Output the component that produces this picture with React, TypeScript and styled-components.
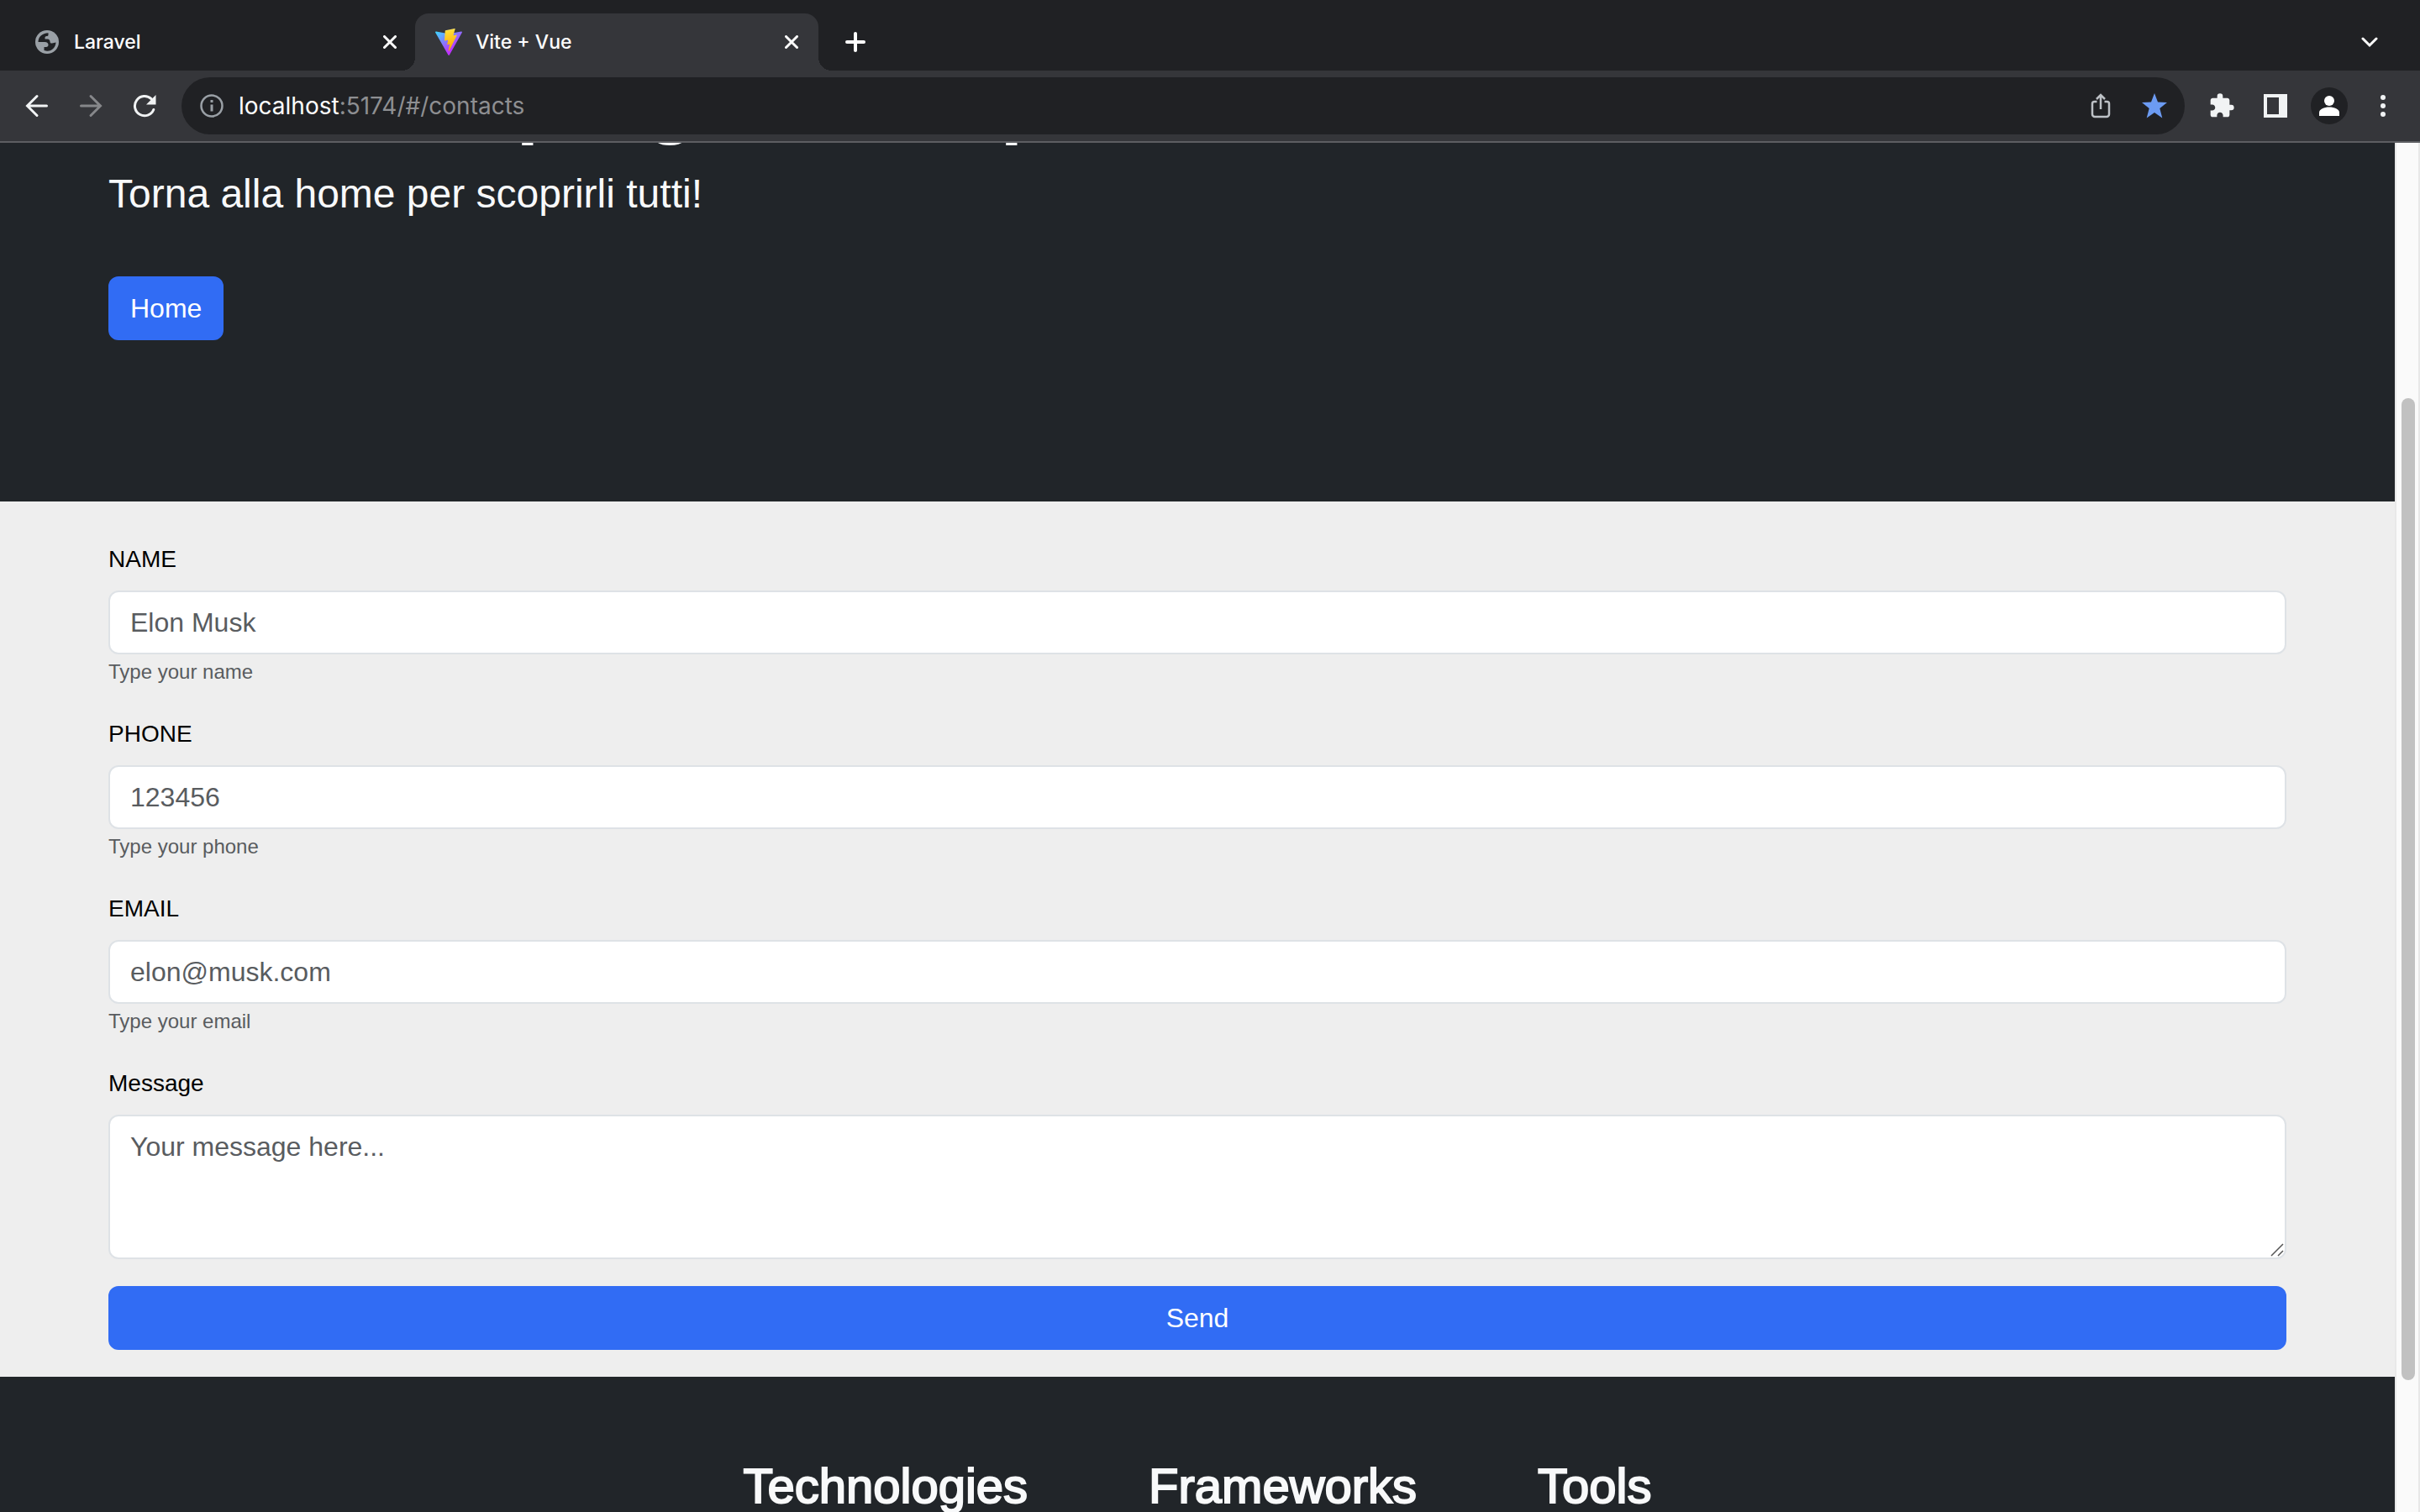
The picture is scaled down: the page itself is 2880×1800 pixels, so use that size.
import React from 'react';
import styled, { createGlobalStyle } from 'styled-components';

const GlobalStyle = createGlobalStyle`
  *, *::before, *::after { box-sizing: border-box; }
  body {
    margin: 0;
    overflow: hidden;
    background: #212529;
    font-family: "Liberation Sans", Arial, sans-serif;
  }
  h1, h2, p { margin: 0; }
`;

const Window = styled.div`
  display: flex;
  flex-direction: column;
  height: 100vh;
`;

const Chrome = styled.header`
  flex: none;
  color: #fff;
  font-family: Inter, Roboto, sans-serif;
  border-bottom: 2px solid #5d5e62;
`;

const TabStrip = styled.nav`
  display: flex;
  align-items: center;
  height: 84px;
  padding: 16px 40px 0 16px;
  background: #202124;
`;

const Tab = styled.div<{ $active?: boolean }>`
  position: relative;
  display: flex;
  align-items: center;
  gap: 16px;
  width: 480px;
  height: 68px;
  padding: 0 22px 0 24px;
  border-radius: 16px 16px 0 0;
  background: ${(p) => (p.$active ? '#35363a' : 'transparent')};

  & + & {
    margin-left: -2px;
  }

  ${(p) =>
    p.$active &&
    `
    &::before, &::after {
      content: '';
      position: absolute;
      bottom: 0;
      width: 16px;
      height: 16px;
    }
    &::before { left: -16px; background: radial-gradient(circle at 0 0, transparent 16px, #35363a 16px); }
    &::after { right: -16px; background: radial-gradient(circle at 100% 0, transparent 16px, #35363a 16px); }
  `}
`;

const TabTitle = styled.span`
  flex: 1;
  font-size: 23px;
  font-weight: 500;
  line-height: 32px;
`;

const IconButton = styled.button<{ $size?: number; $dim?: boolean; $round?: boolean }>`
  display: flex;
  flex: none;
  align-items: center;
  justify-content: center;
  width: ${(p) => p.$size ?? 44}px;
  height: ${(p) => p.$size ?? 44}px;
  padding: 0;
  border: 0;
  border-radius: 50%;
  background: ${(p) => (p.$round ? '#202124' : 'transparent')};
  color: ${(p) => (p.$dim ? '#86878a' : '#f1f3f4')};
`;

const NewTab = styled.div`
  display: flex;
  flex: 1;
  align-items: center;
  justify-content: space-between;
  padding-left: 22px;
`;

const Toolbar = styled.div`
  display: flex;
  align-items: center;
  gap: 20px;
  height: 84px;
  padding: 0 22px;
  background: #35363a;
`;

const AddressBar = styled.div`
  display: flex;
  flex: 1;
  align-items: center;
  gap: 20px;
  height: 68px;
  margin: 0 2px;
  padding: 0 14px 0 22px;
  border-radius: 34px;
  background: #202124;
`;

const Address = styled.span`
  display: flex;
  flex: 1;
  align-items: center;
  gap: 18px;
  color: #8e8f92;
  font-size: 28px;
  line-height: 36px;
`;

const Host = styled.span`
  color: #fff;
`;

const Viewport = styled.div`
  display: flex;
  flex: 1;
  min-height: 0;
`;

const Page = styled.main`
  flex: 1;
  height: 100%;
  overflow: hidden;
`;

const Container = styled.div`
  max-width: 2640px;
  margin: 0 auto;
  padding: 0 24px;
`;

const Hero = styled.section`
  margin-top: -108px;
  padding-bottom: 192px;
  background: #212529;
  color: #f8f9fa;
`;

const HeroTitle = styled.h1`
  margin-bottom: 16px;
  font-size: 96px;
  font-weight: 700;
  line-height: 115px;
`;

const HeroText = styled.p`
  margin-bottom: 60px;
  font-size: 48px;
  line-height: 76px;
`;

const buttonLook = `
  padding: 12px 24px;
  border: 2px solid #316cf4;
  border-radius: 12px;
  background: #316cf4;
  color: #fff;
  font-family: inherit;
  font-size: 32px;
  line-height: 48px;
  text-align: center;
  text-decoration: none;
`;

const HomeLink = styled.a`
  display: inline-block;
  vertical-align: top;
  ${buttonLook}
`;

const SendButton = styled.button`
  display: block;
  width: 100%;
  ${buttonLook}
`;

const ContactSection = styled.section`
  padding: 48px 0 32px;
  background: #eee;
  color: #000;
`;

const Field = styled.div`
  margin-bottom: 32px;
  font-size: 28px;
  line-height: 42px;
`;

const Label = styled.label`
  display: block;
  margin-bottom: 16px;
`;

const controlLook = `
  display: block;
  width: 100%;
  padding: 12px 24px;
  border: 2px solid #dee2e6;
  border-radius: 12px;
  background: #fff;
  color: #212529;
  font-family: inherit;
  font-size: 32px;
  line-height: 48px;
  &::placeholder { color: #595c5f; opacity: 1; }
`;

const Input = styled.input`
  height: 76px;
  ${controlLook}
`;

const MessageBox = styled.div`
  position: relative;
`;

const TextArea = styled.textarea`
  ${controlLook}
  resize: none;
`;

const Grip = styled.svg`
  position: absolute;
  right: 3px;
  bottom: 3px;
`;

const Help = styled.small`
  display: block;
  color: #595c5f;
  font-size: 24px;
`;

const Footer = styled.footer`
  display: flex;
  justify-content: center;
  gap: 144px;
  padding-top: 96px;
  background: #212529;
  color: #f8f9fa;
`;

const FooterTitle = styled.h2`
  font-size: 58px;
  font-weight: 400;
  line-height: 68px;
  -webkit-text-stroke: 2px currentColor;
`;

const ScrollTrack = styled.div`
  display: grid;
  flex: none;
  grid-template-rows: 304fr 1169fr 157fr;
  width: 30px;
  padding: 0 4px 0 6px;
  border: solid #e8e8e8;
  border-width: 0 2px;
  background: #fafafa;
`;

const ScrollThumb = styled.div`
  grid-row: 2;
  border-radius: 8px;
  background: #c1c1c1;
`;

const Globe = () => (
  <svg width="32" height="28" viewBox="-2 0 32 28" aria-hidden="true">
    <circle cx="14" cy="14" r="14" fill="#9aa0a6" />
    <path
      d="M3.500 14C3.500 8 8 3.500 15.500 3.200V5.500C15.500 6.500 14.500 7 13.500 7C12 7 11.500 8 11.500 9V10.500H14.500C16.500 10.500 17.500 12 17.500 13.500C17.500 15 18.500 15.800 20 15.500L24.500 14.500C24.300 20.500 19.500 25 14 24.700L10.500 24V20H13C14.500 20 15.500 19 15.500 17.500C15.500 15.500 14 14 11.500 14Z"
      fill="#202124"
    />
  </svg>
);

const ViteLogo = () => (
  <svg width="32" height="32" viewBox="0 0 256 257" aria-hidden="true">
    <defs>
      <linearGradient id="viteBody" x1="-.828%" x2="57.636%" y1="7.652%" y2="78.411%">
        <stop offset="0%" stopColor="#41D1FF" />
        <stop offset="100%" stopColor="#BD34FE" />
      </linearGradient>
      <linearGradient id="viteBolt" x1="43.376%" x2="50.316%" y1="2.242%" y2="89.030%">
        <stop offset="0%" stopColor="#FFEA83" />
        <stop offset="8.333%" stopColor="#FFDD35" />
        <stop offset="100%" stopColor="#FFA800" />
      </linearGradient>
    </defs>
    <path
      fill="url(#viteBody)"
      d="M255.153 37.938L134.897 252.976c-2.483 4.440-8.862 4.466-11.382.048L.875 37.958c-2.746-4.814 1.371-10.646 6.827-9.670l120.385 21.517a6.537 6.537 0 0 0 2.322-.004l117.867-21.483c5.438-.991 9.574 4.796 6.877 9.620Z"
    />
    <path
      fill="url(#viteBolt)"
      d="M185.432.063L96.440 17.501a3.268 3.268 0 0 0-2.634 3.014l-5.474 92.456a3.268 3.268 0 0 0 3.997 3.378l24.777-5.718c2.318-.535 4.413 1.507 3.936 3.838l-7.361 36.047c-.495 2.426 1.782 4.500 4.151 3.780l15.304-4.649c2.372-.720 4.652 1.360 4.150 3.788l-11.698 56.621c-.732 3.542 3.979 5.473 5.943 2.437l1.313-2.028l72.516-144.720c1.215-2.423-.880-5.186-3.540-4.672l-25.505 4.922c-2.396.462-4.435-1.770-3.759-4.114l16.646-57.705c.677-2.350-1.370-4.583-3.769-4.113Z"
    />
  </svg>
);

const Cross = () => (
  <svg width="16" height="16" viewBox="0 0 16 16" stroke="#fff" strokeWidth="3" aria-hidden="true">
    <path d="M1.500 1.500l13 13M14.500 1.500l-13 13" strokeLinecap="round" />
  </svg>
);

const fields = [
  { id: 'name', label: 'NAME', type: 'text', placeholder: 'Elon Musk', help: 'Type your name' },
  { id: 'phone', label: 'PHONE', type: 'tel', placeholder: '123456', help: 'Type your phone' },
  { id: 'email', label: 'EMAIL', type: 'email', placeholder: 'elon@musk.com', help: 'Type your email' },
];

const footerColumns = ['Technologies', 'Frameworks', 'Tools'];

export default function App() {
  return (
    <Window>
      <GlobalStyle />
      <Chrome>
        <TabStrip aria-label="Tabs">
          <Tab>
            <Globe />
            <TabTitle>Laravel</TabTitle>
            <IconButton $size={20} aria-label="Close Laravel">
              <Cross />
            </IconButton>
          </Tab>
          <Tab $active>
            <ViteLogo />
            <TabTitle>Vite + Vue</TabTitle>
            <IconButton $size={20} aria-label="Close Vite + Vue">
              <Cross />
            </IconButton>
          </Tab>
          <NewTab>
            <IconButton aria-label="New tab">
              <svg width="24" height="24" viewBox="0 0 24 24" stroke="#fff" strokeWidth="4" strokeLinecap="round">
                <path d="M12 2v20M2 12h20" />
              </svg>
            </IconButton>
            <IconButton $size={40} aria-label="Search tabs">
              <svg width="20" height="14" viewBox="0 0 20 14" fill="none" stroke="#fff" strokeWidth="3">
                <path d="M2 3l8 8 8-8" strokeLinecap="round" />
              </svg>
            </IconButton>
          </NewTab>
        </TabStrip>
        <Toolbar>
          <IconButton aria-label="Back">
            <svg width="28" height="28" viewBox="0 0 28 28" fill="none" stroke="currentColor" strokeWidth="3" strokeLinecap="round">
              <path d="M25.500 14H3M14 2.500L2.500 14L14 25.500" />
            </svg>
          </IconButton>
          <IconButton $dim aria-label="Forward">
            <svg width="28" height="28" viewBox="0 0 28 28" fill="none" stroke="currentColor" strokeWidth="3" strokeLinecap="round">
              <path d="M2.500 14h22.500M14 2.500L25.500 14L14 25.500" />
            </svg>
          </IconButton>
          <IconButton aria-label="Reload">
            <svg width="28" height="28" viewBox="0 0 28 28" strokeLinecap="round">
              <path d="M24.800 18.500A11.600 11.600 0 1 1 22 5.700" fill="none" stroke="currentColor" strokeWidth="3" />
              <path d="M27.500 1v11.500H16z" fill="currentColor" />
            </svg>
          </IconButton>
          <AddressBar>
            <Address>
              <svg width="28" height="28" viewBox="0 0 28 28" fill="none" stroke="#9aa0a6">
                <circle cx="14" cy="14" r="12.500" strokeWidth="2.500" />
                <path d="M14 12.500v8M14 7v3" strokeWidth="3" />
              </svg>
              <span>
                <Host>localhost</Host>:5174/#/contacts
              </span>
            </Address>
            <IconButton $dim aria-label="Share">
              <svg width="24" height="30" viewBox="0 0 24 30" fill="none" stroke="#bdc1c6" strokeWidth="2.500">
                <path d="M7.500 10H4.500A2.500 2.500 0 0 0 2 12.500V25a3 3 0 0 0 3 3h14a3 3 0 0 0 3-3V12.500A2.500 2.500 0 0 0 19.500 10H16.500M12 19V2.500M7 7l5-5 5 5" />
              </svg>
            </IconButton>
            <IconButton aria-label="Bookmark">
              <svg width="30" height="30" viewBox="0 0 30 30" fill="#6c9bf2">
                <path d="M15 0l4 10.500 11 .5-8.700 7 3 11.500L15 23l-9.300 6.500 3-11.500L0 11l11-.5z" />
              </svg>
            </IconButton>
          </AddressBar>
          <IconButton aria-label="Extensions">
            <svg width="32" height="32" viewBox="0 0 24 24" fill="#f1f3f4">
              <path d="M20.500 11H19V7c0-1.100-.9-2-2-2h-4V3.500a2.500 2.500 0 0 0-5 0V5H4c-1.100 0-1.990.9-1.990 2v3.800H3.500c1.490 0 2.700 1.210 2.700 2.700s-1.210 2.700-2.700 2.700H2V20c0 1.100.9 2 2 2h3.800v-1.500c0-1.490 1.210-2.700 2.700-2.700s2.700 1.210 2.700 2.700V22H17c1.100 0 2-.9 2-2v-4h1.500a2.500 2.500 0 0 0 0-5z" />
            </svg>
          </IconButton>
          <IconButton aria-label="Side panel">
            <svg width="28" height="28" viewBox="0 0 28 28">
              <path d="M0 0h28v28H0zM4 4v20h14V4z" fill="#f1f3f4" fillRule="evenodd" />
            </svg>
          </IconButton>
          <IconButton $round aria-label="Profile">
            <svg width="24" height="24" viewBox="0 0 24 24" fill="#fff">
              <circle cx="12" cy="6" r="6" />
              <path d="M0 24v-4c0-4 6-6.500 12-6.500s12 2.500 12 6.500v4z" />
            </svg>
          </IconButton>
          <IconButton aria-label="Menu">
            <svg width="6" height="26" viewBox="0 0 6 26" fill="#f1f3f4">
              <circle cx="3" cy="3" r="3" />
              <circle cx="3" cy="13" r="3" />
              <circle cx="3" cy="23" r="3" />
            </svg>
          </IconButton>
        </Toolbar>
      </Chrome>

      <Viewport>
        <Page>
          <Hero>
            <Container>
              <HeroTitle>Alcuni dei progetti che preferisco</HeroTitle>
              <HeroText>Torna alla home per scoprirli tutti!</HeroText>
              <HomeLink href="#/">Home</HomeLink>
            </Container>
          </Hero>
          <ContactSection>
            <Container as="form">
              {fields.map((f) => (
                <Field key={f.id}>
                  <Label htmlFor={f.id}>{f.label}</Label>
                  <Input id={f.id} type={f.type} placeholder={f.placeholder} aria-describedby={`${f.id}-help`} />
                  <Help id={`${f.id}-help`}>{f.help}</Help>
                </Field>
              ))}
              <Field>
                <Label htmlFor="message">Message</Label>
                <MessageBox>
                  <TextArea id="message" rows={3} placeholder="Your message here..." />
                  <Grip width="16" height="16" viewBox="0 0 16 16" stroke="#555" strokeWidth="1.500">
                    <path d="M1 15L15 1M9 15l6-6" />
                  </Grip>
                </MessageBox>
              </Field>
              <SendButton type="button">Send</SendButton>
            </Container>
          </ContactSection>
          <Footer>
            {footerColumns.map((title) => (
              <FooterTitle key={title}>{title}</FooterTitle>
            ))}
          </Footer>
        </Page>
        <ScrollTrack>
          <ScrollThumb />
        </ScrollTrack>
      </Viewport>
    </Window>
  );
}
